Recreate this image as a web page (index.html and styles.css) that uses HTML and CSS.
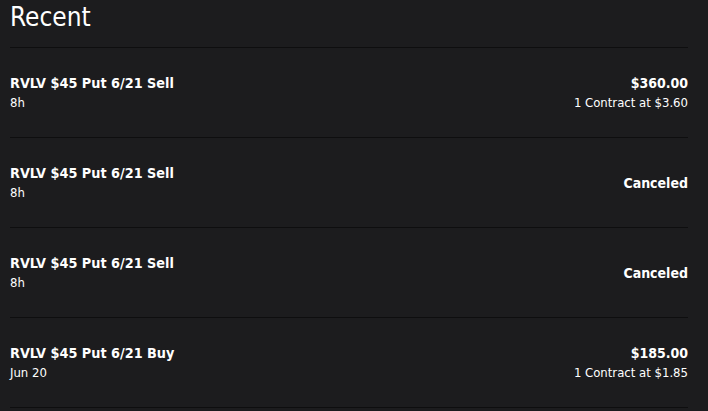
FILE: index.html
```html
<!DOCTYPE html>
<html lang="en">
<head>
  <meta charset="UTF-8">
  <meta name="viewport" content="width=device-width, initial-scale=1.0">
  <title>Recent Orders</title>
  <link rel="stylesheet" href="styles.css">
</head>
<body>
  <div class="container">
    <!-- Recent order history -->
    <h2 class="section-title">Recent</h2>
    <ul class="order-list">
      <li class="order-item">
        <div class="order-info">
          <div class="order-name">RVLV $45 Put 6/21 Sell</div>
          <div class="order-time">8h</div>
        </div>
        <div class="order-result">
          <div class="order-amount">$360.00</div>
          <div class="order-detail">1 Contract at $3.60</div>
        </div>
      </li>
      <li class="order-item">
        <div class="order-info">
          <div class="order-name">RVLV $45 Put 6/21 Sell</div>
          <div class="order-time">8h</div>
        </div>
        <div class="order-result">
          <div class="order-amount">Canceled</div>
        </div>
      </li>
      <li class="order-item">
        <div class="order-info">
          <div class="order-name">RVLV $45 Put 6/21 Sell</div>
          <div class="order-time">8h</div>
        </div>
        <div class="order-result">
          <div class="order-amount">Canceled</div>
        </div>
      </li>
      <li class="order-item">
        <div class="order-info">
          <div class="order-name">RVLV $45 Put 6/21 Buy</div>
          <div class="order-time">Jun 20</div>
        </div>
        <div class="order-result">
          <div class="order-amount">$185.00</div>
          <div class="order-detail">1 Contract at $1.85</div>
        </div>
      </li>
    </ul>
  </div>
</body>
</html>
```

FILE: styles.css
```css
/* General Styles */
body {
  font-family: 'DejaVu Sans Condensed', 'DejaVu Sans', sans-serif;
  background-color: #1c1c1e;
  color: #fff;
  margin: 0;
  padding: 0;
}

.container {
  padding: 0 20px 0 10px;
}

.section-title {
  font-size: 26px;
  font-weight: normal;
  line-height: 34px;
  margin: 0;
  padding-bottom: 13px;
  border-bottom: 1px solid #0e0e0f;
}

/* Order list */
.order-list {
  list-style-type: none;
  margin: 0;
  padding: 0;
}

.order-item {
  height: 89px;
  display: flex;
  justify-content: space-between;
  align-items: center;
  border-bottom: 1px solid #0e0e0f;
}

.order-name,
.order-amount {
  font-size: 14.3px;
  font-weight: bold;
  line-height: 20px;
}

.order-amount {
  font-size: 14px;
}

.order-time,
.order-detail {
  font-size: 13px;
  line-height: 20px;
}

.order-result {
  text-align: right;
}
```
